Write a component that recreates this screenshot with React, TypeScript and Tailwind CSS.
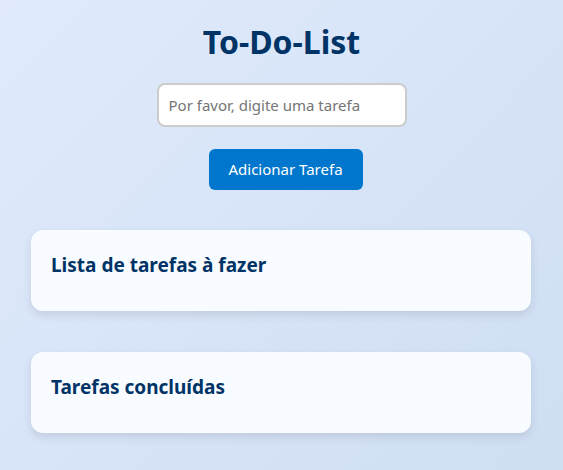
export default function App() {
  return (
    <div
      className="min-h-[470px] w-full bg-[linear-gradient(135deg,#e0eafc,#cfdef3)] flex flex-col items-center pt-[22px]"
      style={{ fontFamily: '"Noto Sans", "Open Sans", sans-serif' }}
    >
      <h1 className="text-[32px] leading-[40px] font-bold text-[#003366]">To-Do-List</h1>
      <input
        type="text"
        placeholder="Por favor, digite uma tarefa"
        className="mt-[21px] w-[250px] h-[44px] border-2 border-[#cccccc] rounded-[8px] bg-white px-[10px] text-[15px] text-[#333] placeholder:text-[#757575] outline-none"
      />
      <button className="mt-[22px] ml-[8px] w-[154px] h-[41px] bg-[#0077cc] text-white text-[15px] rounded-[6px]">
        Adicionar Tarefa
      </button>
      <div className="mt-[40px] self-start ml-[31px] w-[500px] flex flex-col gap-[41px]">
        <div className="h-[81px] bg-[#f8fbff] rounded-[12px] shadow-[0_4px_10px_rgba(0,0,0,0.1)] px-[20px] pt-[22px]">
          <h2 className="text-[19px] leading-[26px] font-bold text-[#003366]">Lista de tarefas à fazer</h2>
        </div>
        <div className="h-[81px] bg-[#f8fbff] rounded-[12px] shadow-[0_4px_10px_rgba(0,0,0,0.1)] px-[20px] pt-[22px]">
          <h2 className="text-[19px] leading-[26px] font-bold text-[#003366]">Tarefas concluídas</h2>
        </div>
      </div>
    </div>
  );
}
